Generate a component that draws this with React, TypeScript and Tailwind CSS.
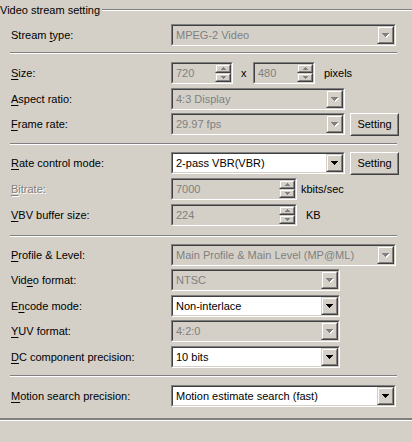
import React from 'react';

const Arrow = ({ disabled }: { disabled?: boolean }) => (
    <svg width="8" height="5" viewBox="0 0 8 5" shapeRendering="crispEdges">
        {disabled && (
            <g fill="#ffffff">
                <rect x="1" y="1" width="7" height="1" />
                <rect x="2" y="2" width="5" height="1" />
                <rect x="3" y="3" width="3" height="1" />
                <rect x="4" y="4" width="1" height="1" />
            </g>
        )}
        <g fill={disabled ? '#808080' : '#000000'}>
            <rect x="0" y="0" width="7" height="1" />
            <rect x="1" y="1" width="5" height="1" />
            <rect x="2" y="2" width="3" height="1" />
            <rect x="3" y="3" width="1" height="1" />
        </g>
    </svg>
);

const SmallArrow = ({ up }: { up?: boolean }) => (
    <svg width="5" height="3" viewBox="0 0 5 3" shapeRendering="crispEdges" className={up ? '' : 'rotate-180'}>
        <g fill="#808080">
            <rect x="2" y="0" width="1" height="1" />
            <rect x="1" y="1" width="3" height="1" />
            <rect x="0" y="2" width="5" height="1" />
        </g>
    </svg>
);

// raised 3d box used for buttons
const Raised = ({ className, children }: { className?: string; children?: React.ReactNode }) => (
    <div className={`border border-t-[#d4d0c8] border-l-[#d4d0c8] border-b-[#404040] border-r-[#404040] ${className ?? ''}`}>
        <div className="w-full h-full border border-t-white border-l-white border-b-[#808080] border-r-[#808080] bg-[#d4d0c8] flex items-center justify-center">
            {children}
        </div>
    </div>
);

const Sunken = ({ className, white, children }: { className?: string; white?: boolean; children?: React.ReactNode }) => (
    <div className={`h-[22px] border border-t-[#808080] border-l-[#808080] border-b-white border-r-white ${className ?? ''}`}>
        <div className={`w-full h-full border border-t-[#404040] border-l-[#404040] border-b-[#d4d0c8] border-r-[#d4d0c8] flex ${white ? 'bg-white' : 'bg-[#d4d0c8]'}`}>
            {children}
        </div>
    </div>
);

const Combo = ({ value, enabled, className }: { value: string; enabled?: boolean; className?: string }) => (
    <Sunken white={enabled} className={className}>
        <span className={`flex-1 pl-[3px] leading-[18px] whitespace-nowrap overflow-hidden ${enabled ? 'text-black' : 'text-[#808080]'}`}>{value}</span>
        <Raised className="w-[17px] h-[18px]">
            <Arrow disabled={!enabled} />
        </Raised>
    </Sunken>
);

const Spin = ({ value, className }: { value: string; className?: string }) => (
    <Sunken className={className}>
        <span className="flex-1 pl-[3px] leading-[18px] text-[#808080]">{value}</span>
        <div className="w-[16px] flex flex-col">
            <Raised className="h-[9px]">
                <SmallArrow up />
            </Raised>
            <Raised className="h-[9px]">
                <SmallArrow />
            </Raised>
        </div>
    </Sunken>
);

const SettingButton = () => (
    <div className="ml-[5px] border border-t-white border-l-white border-b-[#404040] border-r-[#404040] w-[49px] h-[23px]">
        <div className="w-full h-full border border-t-[#d4d0c8] border-l-[#d4d0c8] border-b-[#808080] border-r-[#808080] flex items-center justify-center text-black">
            Setting
        </div>
    </div>
);

const Label = ({ pre, key_, post, disabled }: { pre?: string; key_: string; post: string; disabled?: boolean }) => (
    <div
        className={`w-[160px] shrink-0 whitespace-nowrap ${disabled ? 'text-[#808080] [text-shadow:1px_1px_0_#ffffff]' : 'text-black'}`}
    >
        {pre}
        <span className="underline underline-offset-[2px]">{key_}</span>
        {post}
    </div>
);

const Row = ({ className, children }: { className: string; children: React.ReactNode }) => (
    <div className={`flex items-start h-[22px] pl-[11px] ${className}`}>{children}</div>
);

const Sep = ({ className }: { className: string }) => (
    <div className={`ml-[10px] w-[387px] h-[2px] border-t border-t-[#808080] border-b border-b-white ${className}`} />
);

export default function App() {
    return (
        <div className="w-[412px] h-[442px] overflow-hidden bg-[#d4d0c8] text-[11px] font-['Liberation_Sans',Arial,sans-serif] flex flex-col">
            <div className="h-[20px] flex items-center">
                <span className="pr-[2px] text-black whitespace-nowrap">Video stream setting</span>
                <div className="flex-1 h-[2px] border-t border-t-[#808080] border-b border-b-white" />
            </div>

            <Row className="mt-[4px]">
                <div className="self-center"><Label pre="Stream " key_="t" post="ype:" /></div>
                <Combo value="MPEG-2 Video" className="w-[225px]" />
            </Row>

            <Sep className="mt-[6px]" />

            <Row className="mt-[8px]">
                <div className="self-center"><Label key_="S" post="ize:" /></div>
                <Spin value="720" className="w-[62px]" />
                <span className="self-center ml-[8px] w-[12px]">x</span>
                <Spin value="480" className="w-[62px]" />
                <span className="self-center ml-[9px]">pixels</span>
            </Row>

            <Row className="mt-[4px]">
                <div className="self-center"><Label key_="A" post="spect ratio:" /></div>
                <Combo value="4:3 Display" className="w-[174px]" />
            </Row>

            <Row className="mt-[3px]">
                <div className="self-center"><Label key_="F" post="rame rate:" /></div>
                <Combo value="29.97 fps" className="w-[174px]" />
                <SettingButton />
            </Row>

            <Sep className="mt-[8px]" />

            <Row className="mt-[7px]">
                <div className="self-center"><Label key_="R" post="ate control mode:" /></div>
                <Combo value="2-pass VBR(VBR)" enabled className="w-[174px]" />
                <SettingButton />
            </Row>

            <Row className="mt-[4px]">
                <div className="self-center"><Label key_="B" post="itrate:" disabled /></div>
                <Spin value="7000" className="w-[126px]" />
                <span className="self-center ml-[4px]">kbits/sec</span>
            </Row>

            <Row className="mt-[4px]">
                <div className="self-center"><Label key_="V" post="BV buffer size:" /></div>
                <Spin value="224" className="w-[126px]" />
                <span className="self-center ml-[9px]">KB</span>
            </Row>

            <Sep className="mt-[9px]" />

            <Row className="mt-[7px]">
                <div className="self-center"><Label key_="P" post="rofile & Level:" /></div>
                <Combo value="Main Profile & Main Level (MP@ML)" className="w-[225px]" />
            </Row>

            <Row className="mt-[3px]">
                <div className="self-center"><Label pre="Vid" key_="e" post="o format:" /></div>
                <Combo value="NTSC" className="w-[169px]" />
            </Row>

            <Row className="mt-[4px]">
                <div className="self-center"><Label pre="E" key_="n" post="code mode:" /></div>
                <Combo value="Non-interlace" enabled className="w-[169px]" />
            </Row>

            <Row className="mt-[3px]">
                <div className="self-center"><Label key_="Y" post="UV format:" /></div>
                <Combo value="4:2:0" className="w-[169px]" />
            </Row>

            <Row className="mt-[4px]">
                <div className="self-center"><Label key_="D" post="C component precision:" /></div>
                <Combo value="10 bits" enabled className="w-[169px]" />
            </Row>

            <Sep className="mt-[7px]" />

            <Row className="mt-[8px]">
                <div className="self-center"><Label key_="M" post="otion search precision:" /></div>
                <Combo value="Motion estimate search (fast)" enabled className="w-[225px]" />
            </Row>

            <div className="mt-[11px] h-[3px] border-t-2 border-t-[#808080] border-b border-b-white" />
        </div>
    );
}
